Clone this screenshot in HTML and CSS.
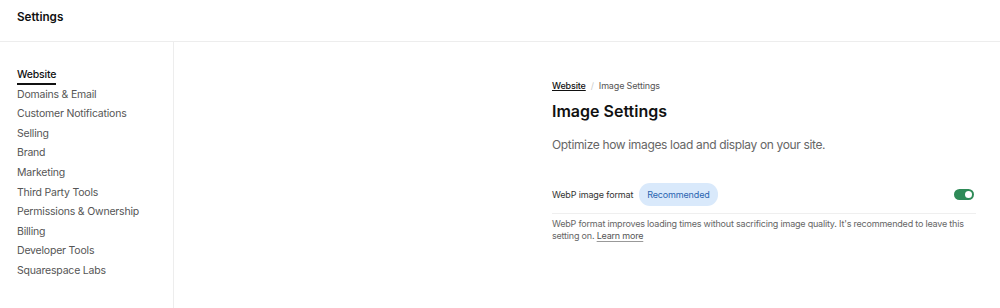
FILE: index.html
```html
<!DOCTYPE html>
<html lang="en">
<head>
    <meta charset="UTF-8">
    <meta name="viewport" content="width=device-width, initial-scale=1.0">
    <title>Settings</title>
    <link rel="stylesheet" href="styles.css">
</head>
<body>
    <!-- top bar -->
    <header class="topbar">
        <h1>Settings</h1>
    </header>

    <div class="layout">
        <!-- left nav -->
        <nav class="sidebar">
            <a href="#" class="active">Website</a>
            <a href="#">Domains &amp; Email</a>
            <a href="#">Customer Notifications</a>
            <a href="#">Selling</a>
            <a href="#">Brand</a>
            <a href="#">Marketing</a>
            <a href="#">Third Party Tools</a>
            <a href="#">Permissions &amp; Ownership</a>
            <a href="#">Billing</a>
            <a href="#">Developer Tools</a>
            <a href="#">Squarespace Labs</a>
        </nav>

        <main class="content">
            <div class="panel">
                <div class="crumbs">
                    <a href="#">Website</a>
                    <span class="sep">/</span>
                    <span>Image Settings</span>
                </div>
                <h2>Image Settings</h2>
                <p class="lead">Optimize how images load and display on your site.</p>

                <div class="option">
                    <span class="label">WebP image format</span>
                    <span class="badge">Recommended</span>
                    <span class="toggle"><span class="knob"></span></span>
                </div>
                <p class="help">WebP format improves loading times without sacrificing image quality. It's recommended to leave this setting on. <a href="#">Learn more</a></p>
            </div>
        </main>
    </div>
</body>
</html>
```

FILE: styles.css
```css
* {
    box-sizing: border-box;
}
body {
    margin: 0;
    font-family: Inter, "Liberation Sans", sans-serif;
    color: #111;
    background-color: #fff;
}
.topbar {
    height: 42px;
    border-bottom: 1px solid #ededed;
    padding: 0 17px;
    display: flex;
    align-items: center;
}
.topbar h1 {
    margin: 0;
    font-size: 11.7px;
    font-weight: 600;
    margin-top: -8px;
}
.layout {
    display: flex;
    height: 266px;
}
.sidebar {
    width: 174px;
    border-right: 1px solid #ededed;
    padding: 26px 0 0 17px;
    display: flex;
    flex-direction: column;
    align-items: flex-start;
}
.sidebar a {
    font-size: 10.5px;
    letter-spacing: -0.2px;
    color: #555;
    text-decoration: none;
    line-height: 13px;
    padding: 0;
    margin-bottom: 6.6px;
}
.sidebar a.active {
    color: #111;
    font-weight: 500;
    border-bottom: 2px solid #111;
    padding-bottom: 2px;
    margin-bottom: 2.6px;
}
.content {
    flex: 1;
    padding: 38px 24px 0 378px;
}
.panel {
    width: 424px;
}
.crumbs {
    font-size: 9px;
    letter-spacing: -0.15px;
    color: #555;
    display: flex;
    gap: 5px;
}
.crumbs a {
    color: #111;
    font-weight: 500;
}
.crumbs .sep {
    color: #ccc;
}
h2 {
    font-size: 16px;
    font-weight: 600;
    margin: 10px 0 0;
}
.lead {
    font-size: 12px;
    letter-spacing: -0.35px;
    color: #666;
    margin: 16px 0 0;
}
.option {
    display: flex;
    align-items: center;
    margin-top: 31px;
    padding-bottom: 7px;
    border-bottom: 1px solid #efefef;
}
.label {
    font-size: 9px;
    letter-spacing: -0.15px;
    color: #333;
}
.badge {
    margin-left: 6px;
    background-color: #d9e9fb;
    color: #2a64b0;
    font-size: 9px;
    letter-spacing: -0.15px;
    padding: 6px 8px;
    border-radius: 11px;
}
.toggle {
    margin-left: auto;
    margin-right: 2px;
    width: 20px;
    height: 11px;
    border-radius: 6px;
    background-color: #2e8a57;
    position: relative;
}
.knob {
    position: absolute;
    right: 2px;
    top: 2px;
    width: 7px;
    height: 7px;
    border-radius: 50%;
    background-color: #fff;
}
.help {
    font-size: 9px;
    letter-spacing: -0.2px;
    line-height: 12px;
    color: #666;
    margin: 4px 0 0;
}
.help a {
    color: #555;
    text-decoration: underline;
    text-decoration-color: #999;
    text-underline-offset: 2px;
}
```
